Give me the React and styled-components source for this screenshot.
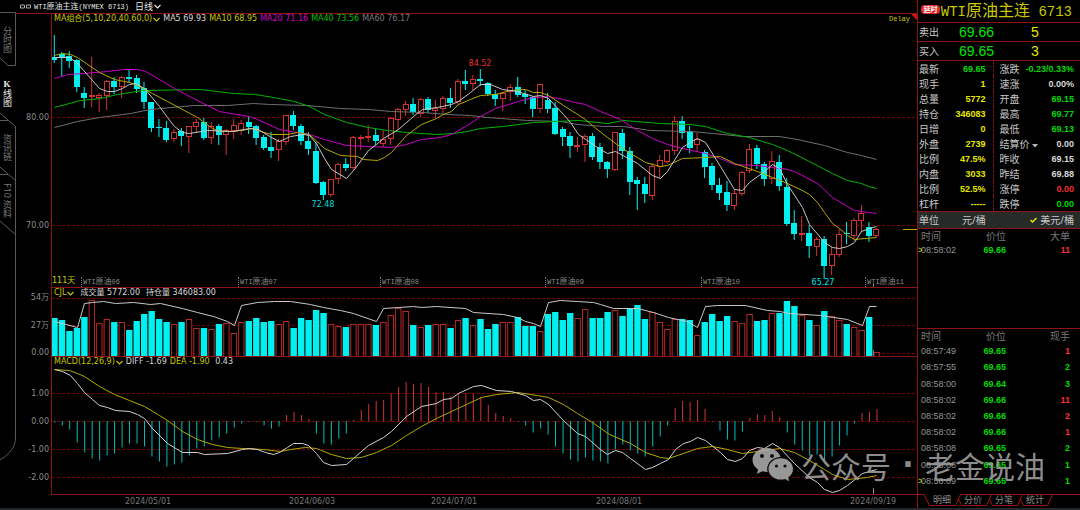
import React from 'react'
import styled, { createGlobalStyle } from 'styled-components'

const STEP = 7.474
const FIRST = 54.3
const PLOT_LEFT = 52
const PLOT_WIDTH = 865

const barX = (i) => FIRST + STEP * i
const leftOf = (x) => `${((x - PLOT_LEFT) / PLOT_WIDTH) * 100}%`

// kind (u = up, d = down), high, top of body, bottom of body, low, volume top, macd end
const bars = `
d 35 57 60 62 318 422|d 52 54 57 75 320 425|d 51 56 61 67 331 429|d 59 60 87 91 328 442|d 87 93 98 107 317 452
u 57 95 97 106 300 458|u 93 95 98 111 323 460|u 80 81 96 109 319 455|d 77 81 87 93 322 453|u 76 77 87 97 322 447
d 69 77 79 82 330 443|d 75 78 89 92 321 443|d 82 88 102 108 314 446|d 102 102 128 131 311 456|d 119 127 128 136 319 461
d 121 128 140 141 322 466|u 129 132 139 141 324 464|d 128 131 136 145 322 462|u 126 126 137 152 319 455|u 119 122 127 131 328 448
d 118 122 138 139 328 446|u 122 126 138 143 329 440|d 124 126 135 144 324 437|u 129 130 135 154 323 433|u 119 125 131 138 333 427
u 120 123 131 134 322 423|d 116 122 127 133 321 421|d 125 126 138 144 318 421|d 135 137 148 149 322 425|d 132 147 151 157 321 428
u 139 141 150 160 324 426|u 115 115 142 144 321 415|d 111 115 126 129 328 412|d 124 126 141 144 318 415|d 132 141 149 154 320 419
d 142 151 183 183 310 433|d 181 182 195 199 313 443|u 179 179 195 196 324 444|u 163 164 179 183 326 438|d 158 164 168 170 327 433
u 136 137 168 169 324 420|u 135 137 139 149 324 410|u 125 136 138 141 324 404|d 129 135 141 144 325 401|u 130 139 144 146 322 400
u 117 118 139 144 315 393|u 108 109 120 129 308 387|u 101 104 110 115 311 382|d 98 104 112 114 325 384|u 98 99 114 116 327 383
d 97 99 110 112 325 387|u 100 108 111 117 324 392|u 96 98 109 114 324 392|d 88 98 103 107 328 396|u 79 81 102 104 320 393
d 70 81 84 89 318 393|u 75 79 84 89 325 394|d 69 79 81 85 319 397|d 82 83 94 95 329 405|d 90 94 99 105 324 413
u 92 93 99 110 322 416|u 84 87 92 100 322 418|d 77 87 95 96 317 421|d 90 94 97 103 326 425|d 96 97 109 116 326 432
u 84 84 109 112 331 428|d 93 100 109 112 314 434|d 102 108 134 134 312 446|d 127 129 137 145 320 453|d 132 136 146 157 313 459
u 137 145 146 151 318 461|u 134 136 145 161 309 457|d 133 136 157 159 318 460|d 143 147 162 168 318 461|d 161 162 169 177 312 463
u 132 132 170 170 310 449|d 129 133 151 158 316 444|d 147 151 182 194 309 450|d 177 180 184 209 305 453|d 177 184 194 202 319 456
u 163 166 196 199 312 446|u 155 160 167 177 322 436|u 149 150 162 163 329 425|u 116 121 151 154 319 408|d 116 121 133 138 319 401
d 126 131 148 152 320 402|u 133 139 145 151 335 400|d 150 152 167 177 322 409|d 163 166 185 189 314 421|d 178 185 193 199 321 430
d 181 192 205 210 316 439|u 189 193 206 209 321 440|u 171 172 194 195 323 431|u 144 149 171 172 314 418|d 145 148 164 168 321 414
d 162 164 179 185 320 415|u 151 161 179 183 313 411|d 155 162 186 190 313 417|d 178 187 224 225 301 432|d 210 223 234 239 306 444
u 216 233 234 240 315 450|d 225 233 246 257 320 455|u 237 239 247 255 325 454|d 236 239 266 278 311 460|u 247 254 266 274 316 456
u 229 234 255 256 320 445|d 222 233 234 243 324 435|u 218 220 236 240 327 423|u 205 213 221 231 330 413|d 222 227 236 241 317 412
u 228 229 236 236 352 409
`
  .trim()
  .split(/[|\n]/)
  .map((row, i) => {
    const [kind, ...n] = row.split(' ')
    const [high, top, bottom, low, vol, macd] = n.map(Number)
    return { x: barX(i), kind, high, top, bottom, low, vol, macd }
  })

const priceLines = [
  {
    color: '#6e6e6e',
    points:
      '54,127 77,121 99,117 130,113 150,109 193,105 227,105 253,103 270,104 307,105 340,108 368,109 391,111 423,112 447,114 470,115 487,117 527,120 560,121 577,124 603,126 623,126 650,130 690,131 713,133 742,136 779,136 797,139 824,145 847,152 861,155 876,159',
  },
  {
    color: '#00b400',
    points:
      '54,107 80,100 100,98 117,94 142,90 200,89 233,93 255,94 273,97 294,101 309,106 324,114 346,122 368,127 387,130 406,132 436,134 453,133 467,131 480,128 503,126 533,122 555,121 578,120 607,123 623,120 660,123 690,124 705,126 727,133 749,137 772,144 787,150 809,161 832,173 847,180 861,183 868,186 876,188',
  },
  {
    color: '#c800c8',
    points:
      '54,78 67,74 84,73 107,71 123,69 137,69 145,71 159,79 174,88 197,100 219,111 230,113 249,116 257,119 279,129 309,134 324,139 346,145 368,146 391,147 406,144 421,139 440,137 451,134 470,123 480,116 495,108 518,101 533,97 548,96 563,99 570,101 585,104 600,111 620,119 637,130 652,138 667,144 682,148 705,153 720,158 734,164 757,165 772,167 787,169 794,171 817,183 832,197 847,206 854,210 876,213',
  },
  {
    color: '#b4aa00',
    points:
      '54,55 62,53 70,54 77,57 99,72 114,79 129,82 137,85 152,93 167,101 197,117 212,128 219,131 233,131 253,128 260,131 271,134 287,134 297,132 309,134 324,148 340,155 357,156 363,159 377,160 384,157 391,152 406,135 421,124 436,118 443,114 451,111 458,104 470,99 480,95 495,94 510,90 525,89 533,92 540,92 548,95 563,105 585,119 593,126 607,137 622,148 645,162 660,166 667,165 682,158 705,157 720,156 734,163 757,171 772,177 787,183 802,190 809,194 817,202 824,212 832,223 839,228 847,235 854,239 876,237',
  },
  {
    color: '#c8c8c8',
    points:
      '54,57 69,57 77,63 92,80 99,88 107,91 114,91 122,88 129,84 135,83 144,88 159,106 167,117 174,126 182,132 189,133 207,130 233,131 249,128 258,129 271,137 279,141 290,136 303,134 309,135 316,143 324,158 331,169 346,178 354,169 368,150 376,144 383,138 398,129 413,116 422,109 437,107 451,104 458,101 470,92 480,84 490,84 502,89 517,91 533,96 540,95 548,98 563,114 570,122 578,134 600,149 607,153 615,151 630,159 637,163 652,175 660,178 667,171 682,147 690,142 697,138 705,142 720,166 734,189 742,190 749,182 764,171 772,164 779,168 787,184 802,207 809,224 824,242 832,247 839,248 847,246 854,242 861,231 869,228 876,226',
  },
]

const interestLine =
  '54,321 77,327 84,303 92,302 103,301 115,303 133,302 150,304 160,303 182,308 197,312 213,316 227,321 234,325 241,305 257,302 274,301 290,301 310,304 323,307 340,310 353,313 376,321 383,308 398,307 413,306 421,307 436,306 465,308 473,312 503,314 517,317 525,321 533,323 540,326 548,302 560,300 577,301 593,302 600,304 613,308 637,308 653,312 668,317 687,321 697,327 705,306 717,305 745,305 767,310 780,311 788,313 820,315 833,317 847,319 862,325 869,306 876,306'

const diffLine =
  '54,369 62,371 70,375 77,383 84,392 92,399 99,405 107,407 115,410 129,411 137,414 144,418 152,428 167,443 182,452 197,452 204,454 227,453 242,449 249,448 257,449 265,452 273,454 279,452 287,447 293,443 302,443 308,445 316,453 323,462 331,465 346,464 353,458 368,445 383,437 391,431 406,416 421,406 436,403 443,399 451,398 458,393 473,386 481,385 496,390 511,391 525,395 533,400 540,399 548,404 563,420 577,433 585,436 600,449 607,454 615,450 622,452 630,458 645,469 652,467 660,463 668,459 675,449 683,443 690,441 697,437 705,440 720,452 727,459 735,461 742,458 749,450 757,447 764,448 772,443 779,447 794,463 809,477 817,482 824,489 832,492 839,490 847,485 862,473 876,469'

const deaLine =
  '54,369 69,370 77,373 84,376 99,386 114,394 129,400 144,406 159,415 167,420 182,431 197,439 212,444 227,447 242,448 263,449 280,451 290,449 305,447 316,448 331,454 346,458 361,457 376,452 391,445 406,435 421,426 436,418 451,411 466,404 481,397 496,394 517,392 537,395 548,397 563,404 577,413 592,422 609,434 630,443 645,452 660,457 668,458 683,453 697,448 712,446 727,449 742,453 757,451 779,448 794,452 809,460 824,469 832,474 847,479 867,477 876,475'

const contracts = [
  ['06', 81],
  ['07', 238],
  ['08', 380],
  ['09', 545],
  ['10', 701],
  ['11', 865],
]

const dates = [
  ['2024/05/01', 148],
  ['2024/06/03', 312],
  ['2024/07/01', 454],
  ['2024/08/01', 619],
  ['2024/09/19', 873],
]

const quotes = [
  ['最新', '69.65', 'green', '涨跌', '-0.23/0.33%', 'green'],
  ['现手', '1', 'yellow', '速涨', '0.00%', 'white'],
  ['总量', '5772', 'yellow', '开盘', '69.15', 'green'],
  ['持仓', '346083', 'yellow', '最高', '69.77', 'green'],
  ['日增', '0', 'yellow', '最低', '69.13', 'green'],
  ['外盘', '2739', 'yellow', '结算价', '0.00', 'white'],
  ['比例', '47.5%', 'yellow', '昨收', '69.15', 'white'],
  ['内盘', '3033', 'yellow', '昨结', '69.88', 'white'],
  ['比例', '52.5%', 'yellow', '涨停', '0.00', 'red'],
  ['杠杆', '-----', 'yellow', '跌停', '0.00', 'green'],
]

const trades = [
  ['08:57:49', '69.65', 1, 'red'],
  ['08:57:55', '69.65', 2, 'green'],
  ['08:58:00', '69.64', 3, 'green'],
  ['08:58:02', '69.66', 11, 'red'],
  ['08:58:02', '69.66', 2, 'red'],
  ['08:58:02', '69.66', 1, 'red'],
  ['08:58:08', '69.65', 2, 'green'],
  ['08:58:08', '69.65', 1, 'green'],
  ['08:58:09', '69.65', 1, 'green'],
]

const palette = {
  green: '#00d800',
  yellow: '#e6e600',
  white: '#d8d8d8',
  red: '#f03030',
}

function Chevron() {
  return (
    <svg width="7" height="5" viewBox="0 0 7 5" aria-hidden="true">
      <path d="M0.5 1 L3.5 4 L6.5 1" fill="none" stroke="currentColor" strokeWidth="1.2" />
    </svg>
  )
}

function Grid({ levels }) {
  return levels.map((y) => (
    <line key={y} x1="52" x2="917" y1={y} y2={y} stroke="#780000" strokeDasharray="3 2" />
  ))
}

function Axis({ top, height, labels }) {
  return (
    <AxisColumn>
      {labels.map(([text, y]) => (
        <AxisLabel key={text} style={{ top: `${((y - top) / height) * 100}%` }}>
          {text}
        </AxisLabel>
      ))}
    </AxisColumn>
  )
}

function PricePanel() {
  return (
    <Panel $size={273}>
      <Axis top={14} height={273} labels={[['80.00', 118], ['70.00', 226]]} />
      <Plot>
        <Drawing viewBox="52 14 865 273" preserveAspectRatio="none">
          <Grid levels={[117.5, 225.5]} />
          {bars.map(({ x, kind, high, top, bottom, low }) =>
            kind === 'd' ? (
              <g key={x} fill="#00f0f0">
                <rect x={x - 0.5} y={high} width="1" height={low - high + 1} />
                <rect x={Math.round(x) - 3} y={top} width="6" height={Math.max(bottom - top, 1)} />
              </g>
            ) : (
              <g key={x}>
                <rect x={x - 0.5} y={high} width="1" height={low - high + 1} fill="#d23232" />
                <rect
                  x={Math.round(x) - 2.5}
                  y={top + 0.5}
                  width="5"
                  height={Math.max(bottom - top - 1, 1)}
                  fill="#000"
                  stroke="#d23232"
                />
              </g>
            )
          )}
          {priceLines.map(({ color, points }) => (
            <polyline key={color} points={points} fill="none" stroke={color} transform="translate(0.5 0.5)" />
          ))}
          <rect x="903" y="229" width="14" height="1" fill="#b4aa00" />
          <path d="M911 14 H917 V20 Z" fill="#d21414" />
          <line x1="873.5" x2="873.5" y1="284" y2="287" stroke="#808080" />
        </Drawing>
        <Legend>
          <Picker type="button">
            MA组合(5,10,20,40,60,0)
            <Chevron />
          </Picker>
          <Reading $color="#d8d8d8">MA5 69.93</Reading>
          <Reading $color="#c8c800">MA10 68.95</Reading>
          <Reading $color="#d200d2">MA20 71.16</Reading>
          <Reading $color="#00c000">MA40 73.56</Reading>
          <Reading $color="#787878">MA60 76.17</Reading>
          <Delay>Delay</Delay>
        </Legend>
        <PriceMark $color="#e63232" style={{ left: leftOf(480), top: `${(50 / 273) * 100}%` }}>
          84.52
        </PriceMark>
        <PriceMark $color="#00d8d8" style={{ left: leftOf(323), top: `${(191 / 273) * 100}%` }}>
          72.48
        </PriceMark>
        <PriceMark $color="#00e6e6" style={{ left: leftOf(823), top: `${(269 / 273) * 100}%` }}>
          65.27
        </PriceMark>
        <Days>111天</Days>
        {contracts.map(([month, x]) => (
          <Contract key={month} style={{ left: leftOf(x) }}>
            WTI<b>原油</b>
            {month}
          </Contract>
        ))}
      </Plot>
    </Panel>
  )
}

function VolumePanel() {
  return (
    <Panel $size={69}>
      <Axis top={287} height={69} labels={[['54万', 298], ['27万', 326], ['0.00', 353]]} />
      <Plot $ruled>
        <Drawing viewBox="52 288 865 68" preserveAspectRatio="none">
          <Grid levels={[298.5, 325.5, 353.5]} />
          {bars.map(({ x, kind, vol }) =>
            kind === 'd' ? (
              <rect key={x} x={x - 3} y={vol} width="6.4" height={356 - vol} fill="#00f0f0" />
            ) : (
              <rect
                key={x}
                x={x - 2.5}
                y={vol + 0.5}
                width="5.4"
                height={356 - vol}
                fill="#000"
                stroke="#b42828"
              />
            )
          )}
          <polyline points={interestLine} fill="none" stroke="#c8c8c8" transform="translate(0.5 0.5)" />
          <line x1="873.5" x2="873.5" y1="350" y2="356" stroke="#808080" />
        </Drawing>
        <Legend $wide>
          <Picker type="button">
            CJL
            <Chevron />
          </Picker>
          <Reading $color="#d8d8d8">成交量 5772.00</Reading>
          <Reading $color="#d8d8d8">持仓量 346083.00</Reading>
        </Legend>
      </Plot>
    </Panel>
  )
}

function MacdPanel() {
  const labels = [
    ['1.00', 394],
    ['0.00', 422],
    ['-1.00', 450],
    ['-2.00', 478],
  ]
  return (
    <Panel $size={139}>
      <Axis top={356} height={139} labels={labels} />
      <Plot $ruled $closed>
        <Drawing viewBox="52 357 865 137" preserveAspectRatio="none">
          <Grid levels={[393.5, 421.5, 449.5, 477.5]} />
          {bars.map(({ x, macd }) => (
            <rect
              key={x}
              x={x}
              y={Math.min(macd, 421)}
              width="1"
              height={Math.abs(macd - 421) + 0.5}
              fill={macd > 420.5 ? '#00bebe' : '#d23232'}
            />
          ))}
          <polyline points={deaLine} fill="none" stroke="#b4aa00" transform="translate(0.5 0.5)" />
          <polyline points={diffLine} fill="none" stroke="#d2d2d2" transform="translate(0.5 0.5)" />
          <line x1="873.5" x2="873.5" y1="488" y2="494" stroke="#909090" />
        </Drawing>
        <Legend>
          <Picker type="button">
            MACD(12,26,9)
            <Chevron />
          </Picker>
          <Reading $color="#d8d8d8">DIFF -1.69</Reading>
          <Reading $color="#c8c800">DEA -1.90</Reading>
          <Reading $color="#d8d8d8"> 0.43</Reading>
        </Legend>
      </Plot>
    </Panel>
  )
}

function Sidebar() {
  return (
    <SideNav>
      <SideTab type="button">
        <SideOutline viewBox="0 0 16 54">
          <path d="M0 0.5 H15.5 V53.5 H8 L0 46" />
        </SideOutline>
        分时图
      </SideTab>
      <SideTab type="button" $active>
        <SideOutline viewBox="0 0 16 54">
          <path d="M0 54.5 H8 M0 47 L15.5 60.5" />
        </SideOutline>
        <Upright>K</Upright>线图
      </SideTab>
      <SideTab type="button">
        <SideOutline viewBox="0 0 16 54">
          <path d="M15.5 6 V54 M0 54.5 H8 M0 47 L15.5 60.5" />
        </SideOutline>
        资讯链
      </SideTab>
      <SideTab type="button">
        <SideOutline viewBox="0 0 16 54">
          <path d="M15.5 0 V54 M0 47 L15.5 60.5" />
        </SideOutline>
        F10 资料
      </SideTab>
      <SideEdge />
      <svg width="16" height="24" viewBox="0 0 16 24" aria-hidden="true">
        <path d="M15.5 0 C15.5 10 8 17 0 22" fill="none" stroke="#5a5a5a" />
      </svg>
    </SideNav>
  )
}

function QuotePanel() {
  return (
    <Quote>
      <Instrument>
        <Badge>延时</Badge>
        <Name>
          WTI<b>原油主连</b> 6713
        </Name>
      </Instrument>
      <Level>
        <span>卖出</span>
        <LevelPrice>69.66</LevelPrice>
        <LevelSize>5</LevelSize>
      </Level>
      <Level>
        <span>买入</span>
        <LevelPrice>69.65</LevelPrice>
        <LevelSize>3</LevelSize>
      </Level>
      <Figures>
        <tbody>
          {quotes.map(([name, value, color, name2, value2, color2]) => (
            <tr key={name2}>
              <th scope="row">{name}</th>
              <Figure $color={palette[color]}>{value}</Figure>
              <th scope="row">
                {name2}
                {name2 === '结算价' && (
                  <svg width="8" height="4" viewBox="0 0 8 4" aria-hidden="true">
                    <path d="M2 0 H8 L5 3.5 Z" fill="#b4b4b4" />
                  </svg>
                )}
              </th>
              <Figure $color={palette[color2]}>{value2}</Figure>
            </tr>
          ))}
        </tbody>
      </Figures>
      <Units>
        <span>单位</span>
        <UnitButton type="button">元/桶</UnitButton>
        <UnitButton type="button" $last>
          <svg width="7" height="6" viewBox="0 0 7 6" aria-hidden="true">
            <path d="M0.5 3 L2.5 5 L6.5 1" fill="none" stroke="#e6e600" strokeWidth="1.5" />
          </svg>
          美元/桶
        </UnitButton>
      </Units>
      <BigOrders>
        <TradeTable>
          <thead>
            <tr>
              <th>时间</th>
              <th>价位</th>
              <th>大单</th>
            </tr>
          </thead>
          <tbody>
            <Trade $color={palette.red} $latest>
              <td>08:58:02</td>
              <td>69.66</td>
              <td>11</td>
            </Trade>
          </tbody>
        </TradeTable>
      </BigOrders>
      <Ticks>
        <TradeTable $tall>
          <thead>
            <tr>
              <th>时间</th>
              <th>价位</th>
              <th>现手</th>
            </tr>
          </thead>
          <tbody>
            {trades.map(([time, price, size, color], i) => (
              <Trade key={i} $color={palette[color]} $latest={i === trades.length - 1}>
                <td>{time}</td>
                <td>{price}</td>
                <td>{size}</td>
              </Trade>
            ))}
          </tbody>
        </TradeTable>
      </Ticks>
      <BottomTabs>
        {['明细', '分价', '分笔', '统计'].map((name, i) => (
          <BottomTab type="button" key={name}>
            <TabOutline viewBox="0 0 31 12">
              <path
                d={
                  i === 0
                    ? 'M-6 0.5 H0 L5.5 11.5 H31.5 L36.5 0.5'
                    : i === 3
                      ? 'M3 4 L6.5 11.5 H30.5 L35.5 0.5 M5.5 0.5 H64'
                      : 'M3 4 L6.5 11.5 H31.5 L36.5 0.5 M5.5 0.5 H36.5'
                }
              />
            </TabOutline>
            {name}
          </BottomTab>
        ))}
      </BottomTabs>
    </Quote>
  )
}

function Watermark() {
  return (
    <Mark>
      <svg width="42" height="36" viewBox="0 0 42 36" aria-hidden="true">
        <path
          d="M15 1 C7 1 0.5 6.3 0.5 13 C0.5 17 2.7 20.3 6 22.4 L5 27 L10.3 24.3 C12 24.7 13.5 25 15 25 C23 25 29 19.5 29 13 C29 6.3 23 1 15 1 Z"
          fill="#a8a8a8"
        />
        <ellipse cx="28.7" cy="22" rx="13.5" ry="12" fill="#0a0a0a" />
        <path
          d="M28.7 11.2 C22 11.2 16.5 16 16.5 22 C16.5 28 22 32.6 28.7 32.6 C30.2 32.6 31.7 32.4 33 32 L37.2 34.3 L36.2 30.5 C39.2 28.5 41 25.5 41 22 C41 16 35.5 11.2 28.7 11.2 Z"
          fill="#a8a8a8"
        />
        <g fill="#111">
          <circle cx="10" cy="9" r="2" />
          <circle cx="20" cy="9" r="2" />
          <circle cx="24.5" cy="19" r="1.6" />
          <circle cx="33" cy="19" r="1.6" />
        </g>
      </svg>
      <MarkText>公众号</MarkText>
      <MarkDot>·</MarkDot>
      <MarkText>老金说油</MarkText>
    </Mark>
  )
}

function App() {
  return (
    <Screen>
      <GlobalStyle />
      <Workspace>
        <Sidebar />
        <Charts>
          <TitleBar>
            <LinkIcon width="11" height="5" viewBox="0 0 11 5" aria-hidden="true">
              <path d="M0.5 1 H4.5 V4 H0.5 Z M6.5 1 H10.5 V4 H6.5 Z" />
            </LinkIcon>
            <Title>
              WTI<b>原油主连</b>(NYMEX 6713)
            </Title>
            <Period type="button">
              日线
              <Chevron />
            </Period>
          </TitleBar>
          <PricePanel />
          <VolumePanel />
          <MacdPanel />
          <DateAxis>
            {dates.map(([text, x]) => (
              <DateLabel key={text} style={{ left: leftOf(x) }}>
                {text}
              </DateLabel>
            ))}
          </DateAxis>
        </Charts>
        <QuotePanel />
      </Workspace>
      <Footer />
      <Watermark />
    </Screen>
  )
}

export default App

const LINE = '#8c1414'
const SANS = `"DejaVu Sans", "Noto Sans CJK SC", sans-serif`
const PANEL_SANS = `"Noto Sans", "Noto Sans CJK SC", sans-serif`
const MONO = `"Liberation Mono", "Noto Sans CJK SC", monospace`

const GlobalStyle = createGlobalStyle`
    body {
        margin: 0;
        background: #000;
    }

    * {
        box-sizing: border-box;
    }

    button {
        background: none;
        border: 0;
        padding: 0;
        color: inherit;
        font: inherit;
        cursor: pointer;
    }
`

const Screen = styled.div`
    position: relative;
    display: flex;
    flex-direction: column;
    min-height: 100vh;
    background: #000;
    color: #c8c8c8;
    font-family: ${SANS};
    font-size: 8px;
    line-height: 10px;
    overflow: hidden;
`

const Workspace = styled.div`
    flex: 1;
    display: flex;
`

const Footer = styled.footer`
    height: 2px;
    background: #24262e;
`

const SideNav = styled.nav`
    width: 16px;
    padding: 12px 0 46px;
    display: flex;
    flex-direction: column;
    font-family: ${PANEL_SANS};
`

const SideTab = styled.button`
    position: relative;
    height: 54px;
    padding-right: 2px !important;
    display: flex;
    align-items: center;
    justify-content: center;
    writing-mode: vertical-rl;
    font-size: 9px !important;
    line-height: 12px !important;
    color: ${({ $active }) => ($active ? '#f0f0f0' : '#787878')} !important;
`

const SideOutline = styled.svg`
    position: absolute;
    inset: 0;
    width: 16px;
    height: 54px;
    overflow: visible;
    fill: none;
    stroke: #5a5a5a;
`

const Upright = styled.span`
    text-orientation: upright;
    font-family: "Liberation Serif", serif;
    font-weight: bold;
`

const SideEdge = styled.div`
    flex: 1;
    border-right: 1px solid #5a5a5a;
`

const Charts = styled.main`
    flex: 1;
    min-width: 0;
    display: flex;
    flex-direction: column;
`

const TitleBar = styled.header`
    height: 14px;
    padding-left: 4px;
    display: flex;
    align-items: center;
    border-bottom: 1px solid ${LINE};
    color: #e6e6e6;
`

const LinkIcon = styled.svg`
    margin-right: 3px;
    fill: none;
    stroke: #aaa;
`

const Title = styled.h1`
    margin: 0 6px 0 0;
    font: 7px/10px ${MONO};

    b {
        font-weight: normal;
        font-size: 8px;
    }
`

const Period = styled.button`
    display: flex;
    align-items: center;
    gap: 1px;
    font-size: 9px !important;
`

const Panel = styled.section`
    flex: ${({ $size }) => `${$size} 0 ${$size}px`};
    display: flex;
`

const AxisColumn = styled.div`
    position: relative;
    width: 35px;
`

const AxisLabel = styled.span`
    position: absolute;
    right: 2px;
    transform: translateY(-50%);
    color: #8c8c8c;
`

const Plot = styled.div`
    position: relative;
    flex: 1;
    border-left: 1px solid ${LINE};
    border-top: ${({ $ruled }) => ($ruled ? `1px solid ${LINE}` : '0')};
    border-bottom: ${({ $closed }) => ($closed ? `1px solid ${LINE}` : '0')};
`

const Drawing = styled.svg`
    position: absolute;
    inset: 0;
    width: 100%;
    height: 100%;
`

const Legend = styled.div`
    position: relative;
    display: flex;
    align-items: center;
    gap: ${({ $wide }) => ($wide ? '6px' : '3px')};
    height: 10px;
    padding: 0 7px 0 2px;
`

const Picker = styled.button`
    display: flex;
    align-items: center;
    gap: 1px;
    color: #c8c800 !important;
`

const Reading = styled.span`
    color: ${({ $color }) => $color};
    white-space: pre;
`

const Delay = styled.span`
    margin-left: auto;
    color: #c8c800;
    font: 7px/10px ${MONO};
`

const PriceMark = styled.span`
    position: absolute;
    transform: translate(-50%, -50%);
    color: ${({ $color }) => $color};
`

const Days = styled.span`
    position: absolute;
    left: 0;
    bottom: 1px;
    color: #c8c800;
`

const Contract = styled.span`
    position: absolute;
    bottom: 0;
    padding-left: 1px;
    border-left: 1px dotted #787878;
    color: #8c8c8c;
    font: 7px/10px ${MONO};
    white-space: nowrap;

    b {
        font-weight: normal;
        font-size: 8px;
    }
`

const DateAxis = styled.div`
    position: relative;
    height: 13px;
    margin-left: 36px;
    color: #787878;
`

const DateLabel = styled.span`
    position: absolute;
    top: 2px;
    transform: translateX(-50%);
`

const Quote = styled.aside`
    width: 163px;
    display: flex;
    flex-direction: column;
    border-left: 1px solid ${LINE};
    font-family: ${PANEL_SANS};
    font-size: 10px;
    line-height: 12px;
`

const Instrument = styled.div`
    height: 23px;
    padding: 2px 8px 0 3px;
    display: flex;
    align-items: center;
    border-bottom: 1px solid ${LINE};
`

const Badge = styled.span`
    width: 19px;
    height: 9px;
    margin-bottom: 6px;
    border-radius: 4px;
    background: #e62828;
    color: #fff;
    font-size: 7px;
    font-weight: bold;
    line-height: 9px;
    text-align: center;
`

const Name = styled.h2`
    margin: 0 0 0 auto;
    color: #c8c800;
    font: 14px/20px ${MONO};
    white-space: nowrap;

    b {
        font-weight: normal;
        font-size: 16px;
    }
`

const Level = styled.div`
    height: 19px;
    padding-left: 1px;
    display: grid;
    grid-template-columns: 40px 72px 1fr;
    align-items: center;
    border-bottom: 1px solid ${LINE};
`

const LevelPrice = styled.span`
    color: #00e600;
    font: 14px/18px "Liberation Sans", sans-serif;
`

const LevelSize = styled.span`
    color: #e6e600;
    font: 14px/18px "Liberation Sans", sans-serif;
`

const Figures = styled.table`
    width: 100%;
    table-layout: fixed;
    border-collapse: collapse;

    th,
    td {
        height: 15px;
        padding: 0;
        line-height: 12px;
    }

    th {
        padding-left: 1px;
        font-weight: normal;
        text-align: left;
        white-space: nowrap;
    }

    th:nth-child(1) {
        width: 30px;
    }

    td:nth-child(2) {
        width: 45px;
        padding-right: 7px;
    }

    th:nth-child(3) {
        width: 32px;
        padding-left: 6px;
        border-left: 1px dashed #781414;
    }

    td:nth-child(4) {
        padding-right: 6px;
    }
`

const Figure = styled.td`
    color: ${({ $color }) => $color};
    font: bold 9px/12px "Liberation Sans", sans-serif;
    text-align: right;
`

const Units = styled.div`
    height: 18px;
    padding: 0 6px 0 1px;
    display: flex;
    align-items: center;
    border: solid ${LINE};
    border-width: 1px 0;
    background: #262a28;
`

const UnitButton = styled.button`
    display: flex;
    align-items: center;
    gap: 3px;
    margin-left: ${({ $last }) => ($last ? 'auto' : '23px')};
`

const BigOrders = styled.div`
    height: 99px;
`

const Ticks = styled.div`
    flex: 1;
    border-top: 1px solid ${LINE};
`

const TradeTable = styled.table`
    width: 100%;
    height: ${({ $tall }) => ($tall ? '160px' : '28px')};
    table-layout: fixed;
    border-collapse: collapse;

    th,
    td {
        padding: 0;
        text-align: right;
    }

    th {
        height: 14px;
        color: #787878;
        font-weight: normal;
    }

    th:nth-child(1),
    td:nth-child(1) {
        width: 50px;
        padding-left: 3px;
        text-align: left;
    }

    th:nth-child(2),
    td:nth-child(2) {
        width: 38px;
    }

    th:nth-child(3),
    td:nth-child(3) {
        padding-right: 10px;
    }
`

const Trade = styled.tr`
    position: relative;
    font: bold 9px/12px "Liberation Sans", sans-serif;

    td:nth-child(1) {
        color: #969696;
        font-weight: normal;
    }

    td:nth-child(1)::before {
        content: "${({ $latest }) => ($latest ? '>' : '')}";
        position: absolute;
        left: 0;
        width: 4px;
        overflow: hidden;
        color: #e6e600;
    }

    td:nth-child(2) {
        color: ${palette.green};
    }

    td:nth-child(3) {
        color: ${({ $color }) => $color};
    }
`

const BottomTabs = styled.div`
    height: 14px;
    padding-left: 6px;
    display: flex;
    align-items: flex-start;
    overflow: hidden;
`

const BottomTab = styled.button`
    position: relative;
    width: 31px;
    height: 12px;
    padding-left: 5px !important;
    color: #8c8c8c !important;
    font-size: 9px !important;
    line-height: 12px !important;
`

const TabOutline = styled.svg`
    position: absolute;
    inset: 0;
    width: 31px;
    height: 12px;
    overflow: visible;
    fill: none;
    stroke: #a01414;
`

const Mark = styled.div`
    position: absolute;
    right: 35px;
    bottom: 25px;
    display: flex;
    align-items: center;
    opacity: 0.9;
    color: #9c9c9c;
    font-size: 30px;
    line-height: 40px;
    pointer-events: none;

    svg {
        margin-right: 7px;
    }
`

const MarkText = styled.span`
    font-family: "Noto Sans CJK SC", sans-serif;
`

const MarkDot = styled.span`
    width: 34px;
    text-align: center;
    font-weight: bold;
`
